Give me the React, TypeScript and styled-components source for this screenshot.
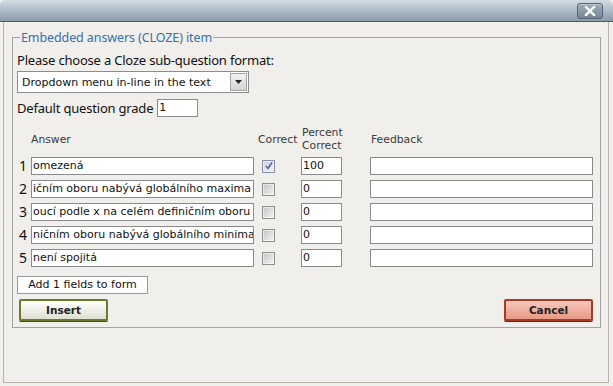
import styled, { createGlobalStyle } from "styled-components";

const Global = createGlobalStyle`
  html, body {
    margin: 0;
    padding: 0;
    background: #f0efec;
  }
  * {
    box-sizing: border-box;
  }
`;

const answers = [
  { text: "omezená", correct: true, percent: "100" },
  { text: "ičním oboru nabývá globálního maxima", correct: false, percent: "0" },
  { text: "oucí podle x na celém definičním oboru", correct: false, percent: "0" },
  { text: "ničním oboru nabývá globálního minima", correct: false, percent: "0" },
  { text: "není spojitá", correct: false, percent: "0" },
];

function App() {
  return (
    <>
      <Global />
      <Window>
        <TitleBar>
          <CloseButton aria-label="Close">
            <svg width="12" height="10" viewBox="0 0 12 10">
              <path d="M2 1 L10 9 M10 1 L2 9" stroke="#fff" strokeWidth="2.4" strokeLinecap="square" />
            </svg>
          </CloseButton>
        </TitleBar>
        <Panel>
          <Group>
            <Legend>Embedded answers (CLOZE) item</Legend>
            <Label>Please choose a Cloze sub-question format:</Label>
            <Select>
              <SelectText>Dropdown menu in-line in the text</SelectText>
              <SelectArrow>
                <svg width="7" height="4" viewBox="0 0 7 4">
                  <path d="M0 0 H7 L3.5 4 Z" fill="#222" />
                </svg>
              </SelectArrow>
            </Select>
            <GradeRow>
              <Label>Default question grade</Label>
              <TextBox $width={41}>1</TextBox>
            </GradeRow>
            <Table>
              <span />
              <HeadCell>Answer</HeadCell>
              <HeadCell $pad={4}>Correct</HeadCell>
              <HeadCell $pad={1}>
                Percent
                <br />
                Correct
              </HeadCell>
              <span />
              <HeadCell $pad={1}>Feedback</HeadCell>
              {answers.map((a, i) => (
                <Row key={i}>
                  <RowNumber>{i + 1}</RowNumber>
                  <TextBox>{a.text}</TextBox>
                  <CheckCell>
                    <Check $checked={a.correct}>
                      {a.correct && (
                        <svg width="8" height="8" viewBox="0 0 8 8">
                          <path d="M1 4 L3 6.5 L7 0.5" stroke="#56669a" strokeWidth="1.6" fill="none" />
                        </svg>
                      )}
                    </Check>
                  </CheckCell>
                  <TextBox>{a.percent}</TextBox>
                  <span />
                  <TextBox />
                </Row>
              ))}
            </Table>
            <AddButton>Add 1 fields to form</AddButton>
            <Actions>
              <ActionButton $tone="green">Insert</ActionButton>
              <ActionButton $tone="red">Cancel</ActionButton>
            </Actions>
          </Group>
        </Panel>
      </Window>
    </>
  );
}

const Window = styled.div`
  width: 613px;
  height: 386px;
  display: flex;
  flex-direction: column;
  background: #f0efec;
  overflow: hidden;
`;

const TitleBar = styled.div`
  height: 22px;
  flex: none;
  display: flex;
  align-items: flex-start;
  justify-content: flex-end;
  padding: 3px 10px 0 0;
  border-radius: 5px 5px 0 0;
  background: linear-gradient(#d3dce3 0%, #b1bec8 45%, #8a9cab 100%);
  border-bottom: 1px solid #4f5d68;
`;

const CloseButton = styled.div`
  width: 26px;
  height: 16px;
  display: flex;
  align-items: center;
  justify-content: center;
  border: 1px solid #56656f;
  border-radius: 3px;
  background: linear-gradient(#9fadb8, #75879a);
  box-shadow: inset 0 1px 0 rgba(255, 255, 255, 0.35);
`;

const Panel = styled.div`
  flex: 1;
  margin: 0 4px 3px 3px;
  border: 1px solid #b8b3ab;
  border-top: none;
  padding: 8px 7px 0 8px;
`;

const Group = styled.fieldset`
  margin: 0;
  padding: 7px 7px 6px 4px;
  border: 1px solid #a3a3a3;
  display: flex;
  flex-direction: column;
  align-items: flex-start;
`;

const Legend = styled.legend`
  padding: 0 1px;
  margin-left: 3px;
  font-family: "Noto Sans", "Liberation Sans", sans-serif;
  font-size: 12.5px;
  line-height: 15px;
  color: #3570b0;
  letter-spacing: -0.1px;
`;

const Label = styled.div`
  font-family: "Noto Sans", "Liberation Sans", sans-serif;
  font-size: 13px;
  line-height: 16px;
  color: #111;
  letter-spacing: -0.2px;
`;

const Select = styled.div`
  margin-top: 3px;
  width: 232px;
  height: 22px;
  display: flex;
  align-items: center;
  justify-content: space-between;
  border: 1px solid #8d8d8d;
  background: #fff;
  padding: 1px 1px 1px 4px;
`;

const SelectText = styled.span`
  font-family: "DejaVu Sans", Verdana, sans-serif;
  font-size: 11px;
  color: #111;
`;

const SelectArrow = styled.span`
  width: 17px;
  height: 18px;
  display: flex;
  align-items: center;
  justify-content: center;
  border: 1px solid #a5a5a5;
  background: linear-gradient(#f2f2f2, #d4d4d4);
`;

const GradeRow = styled.div`
  margin-top: 6px;
  display: flex;
  align-items: center;
  gap: 4px;
`;

const TextBox = styled.div<{ $width?: number }>`
  width: ${({ $width }) => ($width ? `${$width}px` : "100%")};
  height: 18px;
  border: 1px solid #8a8a8a;
  background: #fff;
  padding: 0 1px;
  font-family: "DejaVu Sans", Verdana, sans-serif;
  font-size: 11px;
  line-height: 16px;
  color: #111;
  white-space: nowrap;
  overflow: hidden;
`;

const Table = styled.div`
  margin-top: 9px;
  display: grid;
  grid-template-columns: 14px 223px 47px 41px 28px 223px;
  row-gap: 5px;
  align-items: center;
`;

const HeadCell = styled.div<{ $pad?: number }>`
  padding-left: ${({ $pad }) => $pad ?? 0}px;
  font-family: "DejaVu Sans", Verdana, sans-serif;
  font-size: 10.8px;
  line-height: 13px;
  color: #3a3a3a;
`;

const Row = styled.div`
  display: contents;
`;

const RowNumber = styled.div`
  font-family: "Noto Sans", "Liberation Sans", sans-serif;
  font-size: 14px;
  line-height: 18px;
  color: #111;
  padding-left: 2px;
`;

const CheckCell = styled.div`
  padding-left: 8px;
  display: flex;
  align-items: center;
`;

const Check = styled.div<{ $checked: boolean }>`
  width: 13px;
  height: 13px;
  display: flex;
  align-items: center;
  justify-content: center;
  border: 1px solid ${({ $checked }) => ($checked ? "#858ea6" : "#8e8e8e")};
  background: ${({ $checked }) =>
    $checked
      ? "linear-gradient(135deg, #c9cfdd, #f4f5f9)"
      : "linear-gradient(135deg, #c4c4c4, #f3f3f3)"};
  box-shadow: inset 0 0 0 1px rgba(255, 255, 255, 0.5);
`;

const AddButton = styled.div`
  margin-top: 9px;
  width: 131px;
  height: 18px;
  border: 1px solid #999;
  background: #fff;
  font-family: "DejaVu Sans", Verdana, sans-serif;
  font-size: 11px;
  line-height: 16px;
  text-align: center;
  color: #111;
`;

const Actions = styled.div`
  margin-top: 5px;
  align-self: stretch;
  display: flex;
  justify-content: space-between;
  padding-left: 2px;
`;

const ActionButton = styled.div<{ $tone: "green" | "red" }>`
  width: 89px;
  height: 22px;
  border: 2px solid ${({ $tone }) => ($tone === "green" ? "#6d7a2c" : "#a63b22")};
  border-radius: 2px;
  background: ${({ $tone }) =>
    $tone === "green"
      ? "linear-gradient(#ffffff, #ecece4 60%, #dedfd2)"
      : "linear-gradient(#f6c9bd, #eeaa99 60%, #e79a88)"};
  box-shadow: 0 1px 0 ${({ $tone }) => ($tone === "green" ? "#3f4718" : "#6c1f10")};
  font-family: "DejaVu Sans", Verdana, sans-serif;
  font-weight: bold;
  font-size: 10.5px;
  line-height: 18px;
  text-align: center;
  color: #222;
`;

export default App;
